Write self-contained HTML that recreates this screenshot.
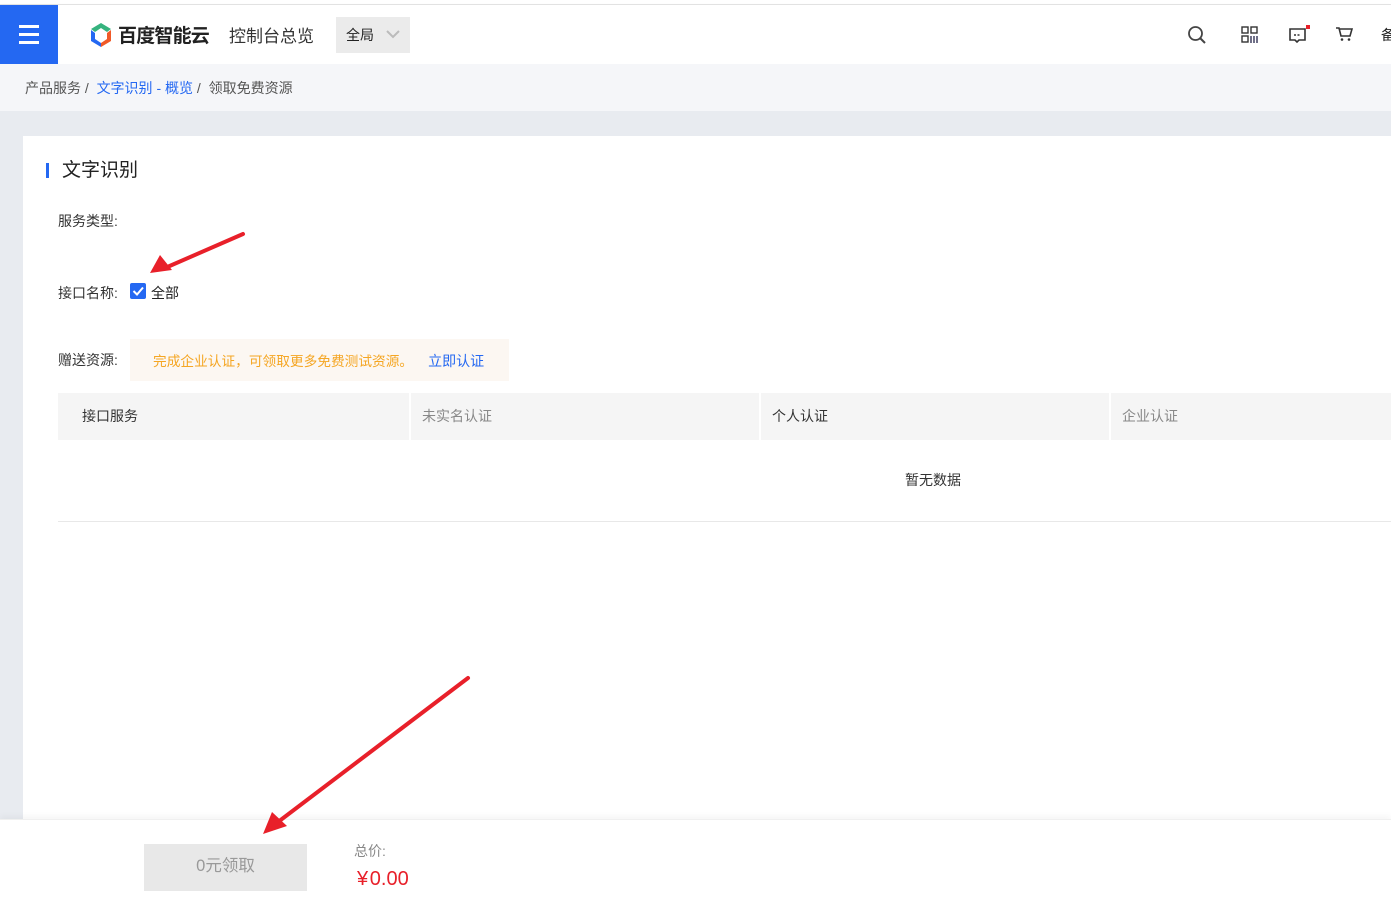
<!DOCTYPE html>
<html><head><meta charset="utf-8"><style>
*{margin:0;padding:0;box-sizing:border-box}
body{width:1391px;height:913px;overflow:hidden;background:#e8ebf0;font-family:"Liberation Sans","Noto Sans CJK SC",sans-serif;position:relative;color:#333}
.abs{position:absolute}
</style></head><body>
<div class="abs" style="left:0;top:0;width:1391px;height:5px;background:#fff;border-bottom:1px solid #e4e4e4"></div>
<div class="abs" style="left:0;top:5px;width:1391px;height:59px;background:#fff;box-shadow:0 2px 4px rgba(0,0,0,.08)"></div>
<div class="abs" style="left:0;top:5px;width:58px;height:59px;background:#2468f2">
  <div class="abs" style="left:19px;top:20px;width:20px;height:3px;background:#fff"></div>
  <div class="abs" style="left:19px;top:28px;width:20px;height:3px;background:#fff"></div>
  <div class="abs" style="left:19px;top:36px;width:20px;height:3px;background:#fff"></div>
</div>
<svg class="abs" style="left:88px;top:22px" width="26" height="26" viewBox="0 0 26 26">
<path d="M13 1 L23 7 L19 10 L13 6 L7 10 L3 7Z" fill="#36b37e"/>
<path d="M3 8 L7 11 L7 17 L13 21 L13 25 L3 19Z" fill="#2468f2"/>
<path d="M23 8 L19 11 L19 17 L13 21 L13 25 L23 19Z" fill="#f05a28"/>
</svg>
<div class="abs" style="left:118px;top:21px;font-size:19px;font-weight:bold;color:#222;letter-spacing:-0.8px">百度智能云</div>
<div class="abs" style="left:229px;top:22px;font-size:17px;color:#333">控制台总览</div>
<div class="abs" style="left:336px;top:17px;width:74px;height:36px;background:#ebebeb"></div>
<div class="abs" style="left:346px;top:25px;font-size:14px;color:#222">全局</div>
<svg class="abs" style="left:386px;top:29px" width="14" height="10"><path d="M1 2 L7 8 L13 2" stroke="#bbb" stroke-width="2" fill="none"/></svg>
<svg class="abs" style="left:1187px;top:25px" width="20" height="20"><circle cx="8.5" cy="8.5" r="6.5" stroke="#444" stroke-width="1.8" fill="none"/><path d="M13 13 L18 18" stroke="#444" stroke-width="2"/></svg>
<svg class="abs" style="left:1241px;top:26px" width="18" height="18"><rect x="1" y="1" width="6" height="6" stroke="#333" fill="none" stroke-width="1.4"/><rect x="10" y="1" width="6" height="6" stroke="#333" fill="none" stroke-width="1.4"/><rect x="1" y="10" width="6" height="6" stroke="#333" fill="none" stroke-width="1.4"/><path d="M10 10 V17 M13 10 V17 M16 10 V17" stroke="#335" stroke-width="1.4"/></svg>
<svg class="abs" style="left:1288px;top:24px" width="24" height="20"><path d="M2 5 H17 V16 H11 L9 18 L7 16 H2Z" stroke="#333" stroke-width="1.6" fill="none"/><path d="M6 11 H13" stroke="#333" stroke-width="1.4" stroke-dasharray="2 1.5"/><rect x="18" y="1" width="4" height="4" fill="#e8202a"/></svg>
<svg class="abs" style="left:1335px;top:26px" width="18" height="16"><path d="M1 2 H4 L6 10 H15 L17 3 H5" stroke="#333" stroke-width="1.6" fill="none"/><circle cx="7" cy="13.5" r="1.3" fill="#333"/><circle cx="14" cy="13.5" r="1.3" fill="#333"/></svg>
<div class="abs" style="left:1381px;top:25px;font-size:14px;color:#222">备</div>
<div class="abs" style="left:0;top:64px;width:1391px;height:47px;background:#f5f6f9"></div>
<div class="abs" style="left:25px;top:78px;font-size:14px;color:#555;white-space:nowrap">产品服务 /&nbsp;&nbsp;<span style="color:#2468f2">文字识别 - 概览</span> /&nbsp;&nbsp;领取免费资源</div>
<div class="abs" style="left:23px;top:136px;width:1368px;height:700px;background:#fff"></div>
<div class="abs" style="left:46px;top:163px;width:3px;height:15px;background:#2468f2"></div>
<div class="abs" style="left:62px;top:155px;font-size:19px;color:#222">文字识别</div>
<div class="abs" style="left:58px;top:211px;font-size:14px;color:#333">服务类型:</div>
<div class="abs" style="left:58px;top:283px;font-size:14px;color:#333">接口名称:</div>
<div class="abs" style="left:130px;top:283px;width:16px;height:16px;background:#2468f2;border-radius:2px"></div>
<svg class="abs" style="left:130px;top:283px" width="16" height="16"><path d="M3.5 8 L7 11.5 L13 4.5" stroke="#fff" stroke-width="2" fill="none"/></svg>
<div class="abs" style="left:151px;top:283px;font-size:14px;color:#222">全部</div>
<div class="abs" style="left:58px;top:350px;font-size:14px;color:#333">赠送资源:</div>
<div class="abs" style="left:130px;top:339px;width:379px;height:42px;background:#fcf7f2"></div>
<div class="abs" style="left:153px;top:350px;font-size:13.7px;color:#f5a623;white-space:nowrap">完成企业认证，可领取更多免费测试资源。<span style="color:#2468f2;margin-left:15px;font-size:14px">立即认证</span></div>
<div class="abs" style="left:58px;top:393px;width:1333px;height:47px;background:#f5f5f5"></div>
<div class="abs" style="left:409px;top:393px;width:2px;height:47px;background:#fff"></div>
<div class="abs" style="left:759px;top:393px;width:2px;height:47px;background:#fff"></div>
<div class="abs" style="left:1109px;top:393px;width:2px;height:47px;background:#fff"></div>
<div class="abs" style="left:82px;top:406px;font-size:14px;color:#333">接口服务</div>
<div class="abs" style="left:422px;top:406px;font-size:14px;color:#888">未实名认证</div>
<div class="abs" style="left:772px;top:406px;font-size:14px;color:#333">个人认证</div>
<div class="abs" style="left:1122px;top:406px;font-size:14px;color:#888">企业认证</div>
<div class="abs" style="left:905px;top:470px;font-size:14px;color:#333">暂无数据</div>
<div class="abs" style="left:58px;top:521px;width:1333px;height:1px;background:#e8e8e8"></div>
<div class="abs" style="left:0;top:819px;width:1391px;height:94px;background:#fff;box-shadow:0 -3px 6px rgba(0,0,0,.04);border-top:1px solid #f0f0f0"></div>
<div class="abs" style="left:144px;top:844px;width:163px;height:47px;background:#e8e8e8;text-align:center;line-height:45px;font-size:16.5px;color:#999">0元领取</div>
<div class="abs" style="left:354px;top:841px;font-size:14px;color:#888">总价:</div>
<div class="abs" style="left:357px;top:868px;font-size:20px;color:#e8202a">¥&#8202;0.00</div>
<svg class="abs" style="left:0;top:0" width="1391" height="913" viewBox="0 0 1391 913">
<path d="M243 234 L165 268" stroke="#e8202a" stroke-width="4" stroke-linecap="round"/>
<path d="M150 273 L160 255 L172 270Z" fill="#e8202a"/>
<path d="M468 678 L278 822" stroke="#e8202a" stroke-width="4" stroke-linecap="round"/>
<path d="M263 834 L272 812 L287 826Z" fill="#e8202a"/>
</svg>
</body></html>
